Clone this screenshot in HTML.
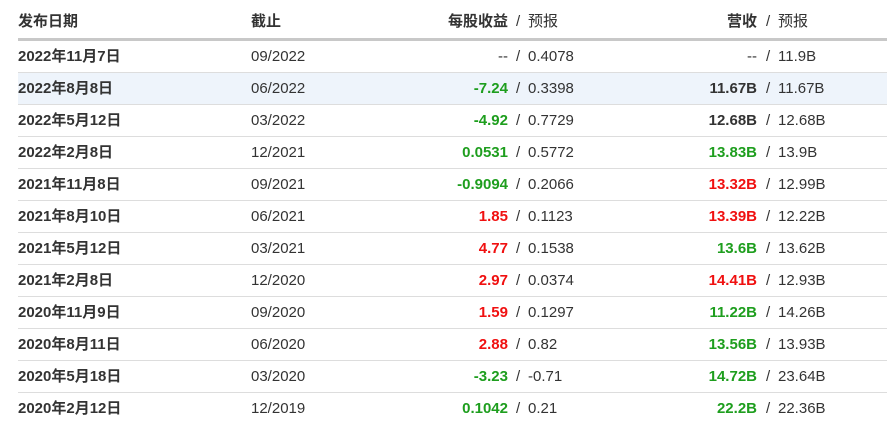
<!DOCTYPE html>
<html><head><meta charset="utf-8"><style>
body{margin:0;background:#fff;font-family:"Liberation Sans","Noto Sans CJK SC",sans-serif;font-size:15px;color:#333;}
.t{position:absolute;left:18px;top:1px;width:869px;}
.r{position:relative;height:31px;border-bottom:1px solid #ddd;line-height:31px;}
.h{height:37px;line-height:42px;border-bottom:3px solid #c8c8c8;font-weight:bold;}
.r span{position:absolute;white-space:nowrap;}
.d{left:0;font-weight:bold;}
.c{left:233px;}
.ea{right:379px;font-weight:bold;}
.es{left:498px;}
.ef{left:510px;}
.ra{right:130px;font-weight:bold;}
.rs{left:748px;}
.rf{left:760px;}
.g{color:#1e9e1e}.x{color:#f01010}
.hl{background:#eef4fb}
.h .es,.h .ef,.h .rs,.h .rf{font-weight:normal}
</style></head><body><div class="t">
<div class="r h"><span class="d">发布日期</span><span class="c">截止</span><span class="ea">每股收益</span><span class="es">/</span><span class="ef">预报</span><span class="ra">营收</span><span class="rs">/</span><span class="rf">预报</span></div>
<div class="r"><span class="d">2022年11月7日</span><span class="c">09/2022</span><span class="ea" style="font-weight:normal">--</span><span class="es">/</span><span class="ef">0.4078</span><span class="ra" style="font-weight:normal">--</span><span class="rs">/</span><span class="rf">11.9B</span></div>
<div class="r hl"><span class="d">2022年8月8日</span><span class="c">06/2022</span><span class="ea g">-7.24</span><span class="es">/</span><span class="ef">0.3398</span><span class="ra">11.67B</span><span class="rs">/</span><span class="rf">11.67B</span></div>
<div class="r"><span class="d">2022年5月12日</span><span class="c">03/2022</span><span class="ea g">-4.92</span><span class="es">/</span><span class="ef">0.7729</span><span class="ra">12.68B</span><span class="rs">/</span><span class="rf">12.68B</span></div>
<div class="r"><span class="d">2022年2月8日</span><span class="c">12/2021</span><span class="ea g">0.0531</span><span class="es">/</span><span class="ef">0.5772</span><span class="ra g">13.83B</span><span class="rs">/</span><span class="rf">13.9B</span></div>
<div class="r"><span class="d">2021年11月8日</span><span class="c">09/2021</span><span class="ea g">-0.9094</span><span class="es">/</span><span class="ef">0.2066</span><span class="ra x">13.32B</span><span class="rs">/</span><span class="rf">12.99B</span></div>
<div class="r"><span class="d">2021年8月10日</span><span class="c">06/2021</span><span class="ea x">1.85</span><span class="es">/</span><span class="ef">0.1123</span><span class="ra x">13.39B</span><span class="rs">/</span><span class="rf">12.22B</span></div>
<div class="r"><span class="d">2021年5月12日</span><span class="c">03/2021</span><span class="ea x">4.77</span><span class="es">/</span><span class="ef">0.1538</span><span class="ra g">13.6B</span><span class="rs">/</span><span class="rf">13.62B</span></div>
<div class="r"><span class="d">2021年2月8日</span><span class="c">12/2020</span><span class="ea x">2.97</span><span class="es">/</span><span class="ef">0.0374</span><span class="ra x">14.41B</span><span class="rs">/</span><span class="rf">12.93B</span></div>
<div class="r"><span class="d">2020年11月9日</span><span class="c">09/2020</span><span class="ea x">1.59</span><span class="es">/</span><span class="ef">0.1297</span><span class="ra g">11.22B</span><span class="rs">/</span><span class="rf">14.26B</span></div>
<div class="r"><span class="d">2020年8月11日</span><span class="c">06/2020</span><span class="ea x">2.88</span><span class="es">/</span><span class="ef">0.82</span><span class="ra g">13.56B</span><span class="rs">/</span><span class="rf">13.93B</span></div>
<div class="r"><span class="d">2020年5月18日</span><span class="c">03/2020</span><span class="ea g">-3.23</span><span class="es">/</span><span class="ef">-0.71</span><span class="ra g">14.72B</span><span class="rs">/</span><span class="rf">23.64B</span></div>
<div class="r" style="border-bottom:none"><span class="d">2020年2月12日</span><span class="c">12/2019</span><span class="ea g">0.1042</span><span class="es">/</span><span class="ef">0.21</span><span class="ra g">22.2B</span><span class="rs">/</span><span class="rf">22.36B</span></div>
</div></body></html>
